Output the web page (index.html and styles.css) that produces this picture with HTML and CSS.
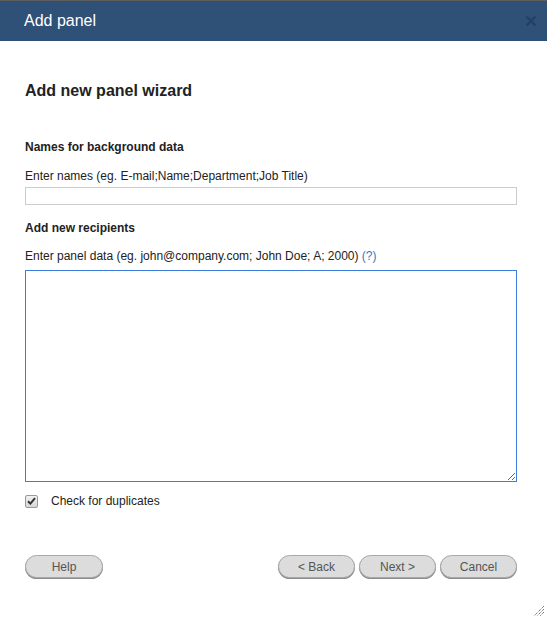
FILE: index.html
```html
<!DOCTYPE html>
<html>

<head>
    <meta charset="UTF-8">
    <meta name="viewport" content="width=device-width, initial-scale=1.0">
    <link rel="stylesheet" href="styles.css">
</head>

<body>
    <div class="dialog">
        <div class="dialog-header">
            <span class="dialog-title">Add panel</span>
            <svg class="close-btn" width="12" height="12" viewBox="0 0 12 12">
                <path d="M1.5 1.5 L10.5 10.5 M10.5 1.5 L1.5 10.5" stroke="#223e62" stroke-width="2.4"/>
            </svg>
        </div>
        <div class="dialog-body">
            <h1>Add new panel wizard</h1>

            <div class="section-title">Names for background data</div>
            <label class="field-label" for="names">Enter names (eg. E-mail;Name;Department;Job Title)</label>
            <input type="text" id="names" class="text-input">

            <div class="section-title second">Add new recipients</div>
            <label class="field-label" for="panelData">Enter panel data (eg. john@company.com; John Doe; A; 2000) <a href="#" class="help-link">(?)</a></label>
            <textarea id="panelData" class="panel-data" autofocus></textarea>

            <label class="check">
                <span class="check-box">
                    <svg width="9" height="8" viewBox="0 0 9 8">
                        <path d="M1 4.2 L3.4 6.6 L8 1.2" fill="none" stroke="#333" stroke-width="2"/>
                    </svg>
                </span>
                Check for duplicates
            </label>

            <div class="buttons">
                <button class="btn">Help</button>
                <div class="nav-buttons">
                    <button class="btn">&lt; Back</button>
                    <button class="btn">Next &gt;</button>
                    <button class="btn">Cancel</button>
                </div>
            </div>
        </div>
        <div class="grip-row">
            <svg class="grip" width="12" height="12" viewBox="0 0 12 12">
                <path d="M11 1 L1 11 M11 4 L4 11 M11 7 L7 11" stroke="#444" stroke-width="1" stroke-dasharray="1 1"/>
            </svg>
        </div>
    </div>
</body>

</html>
```

FILE: styles.css
```css
body {
    margin: 0;
    padding: 0;
    background-color: #fff;
    font-family: "Liberation Sans", Arial, sans-serif;
    color: #222;
}

.dialog {
    width: 547px;
    height: 619px;
    display: flex;
    flex-direction: column;
    background-color: #fff;
}

.dialog-header {
    height: 40px;
    border-top: 1px solid #5e5e5e;
    background-color: #2f5077;
    display: flex;
    align-items: center;
    justify-content: space-between;
    padding: 0 10px 0 24px;
}

.dialog-title {
    color: #fff;
    font-size: 16px;
}

.close-btn {
    opacity: 0.85;
}

.dialog-body {
    padding: 0 30px 0 25px;
    flex: 1;
}

h1 {
    margin: 40px 0 0 0;
    font-size: 16px;
    line-height: 20px;
    font-weight: bold;
    color: #222;
}

.section-title {
    margin-top: 38px;
    font-size: 12px;
    line-height: 16px;
    font-weight: bold;
}

.section-title.second {
    margin-top: 15px;
}

.field-label {
    display: block;
    margin-top: 13px;
    font-size: 12px;
    line-height: 16px;
    color: #222;
}

.section-title.second + .field-label {
    margin-top: 12px;
}

.help-link {
    color: #3a78c2;
    text-decoration: none;
}

.text-input {
    display: block;
    box-sizing: border-box;
    width: 492px;
    height: 18px;
    margin: 3px 0 0 0;
    border: 1px solid #ccc;
    padding: 0 4px;
    font-family: inherit;
    font-size: 12px;
}

.panel-data {
    display: block;
    box-sizing: border-box;
    width: 492px;
    height: 212px;
    margin: 6px 0 0 0;
    border: 1px solid #3c7ddc;
    padding: 2px;
    font-family: inherit;
    font-size: 12px;
    outline: none;
    resize: both;
}

.check {
    display: flex;
    align-items: center;
    margin-top: 11px;
    font-size: 12px;
    line-height: 16px;
    color: #222;
}

.check-box {
    box-sizing: border-box;
    width: 13px;
    height: 13px;
    margin-right: 13px;
    border: 1px solid #9a9a9a;
    border-radius: 2px;
    background: linear-gradient(#f2f2f2, #d6d6d6);
    display: flex;
    align-items: center;
    justify-content: center;
}

.buttons {
    display: flex;
    justify-content: space-between;
    margin-top: 46px;
}

.nav-buttons {
    display: flex;
    gap: 4px;
}

.btn {
    width: 77px;
    height: 23px;
    border: 1px solid #a8a8a8;
    border-radius: 12px;
    background-color: #dcdcdc;
    box-shadow: 0 1px 0 #8c8c8c;
    color: #555;
    font-family: inherit;
    font-size: 12px;
    padding: 0;
    cursor: pointer;
}

.buttons > .btn {
    width: 78px;
}

.grip-row {
    display: flex;
    justify-content: flex-end;
    padding: 0 2px 2px 0;
}
```
